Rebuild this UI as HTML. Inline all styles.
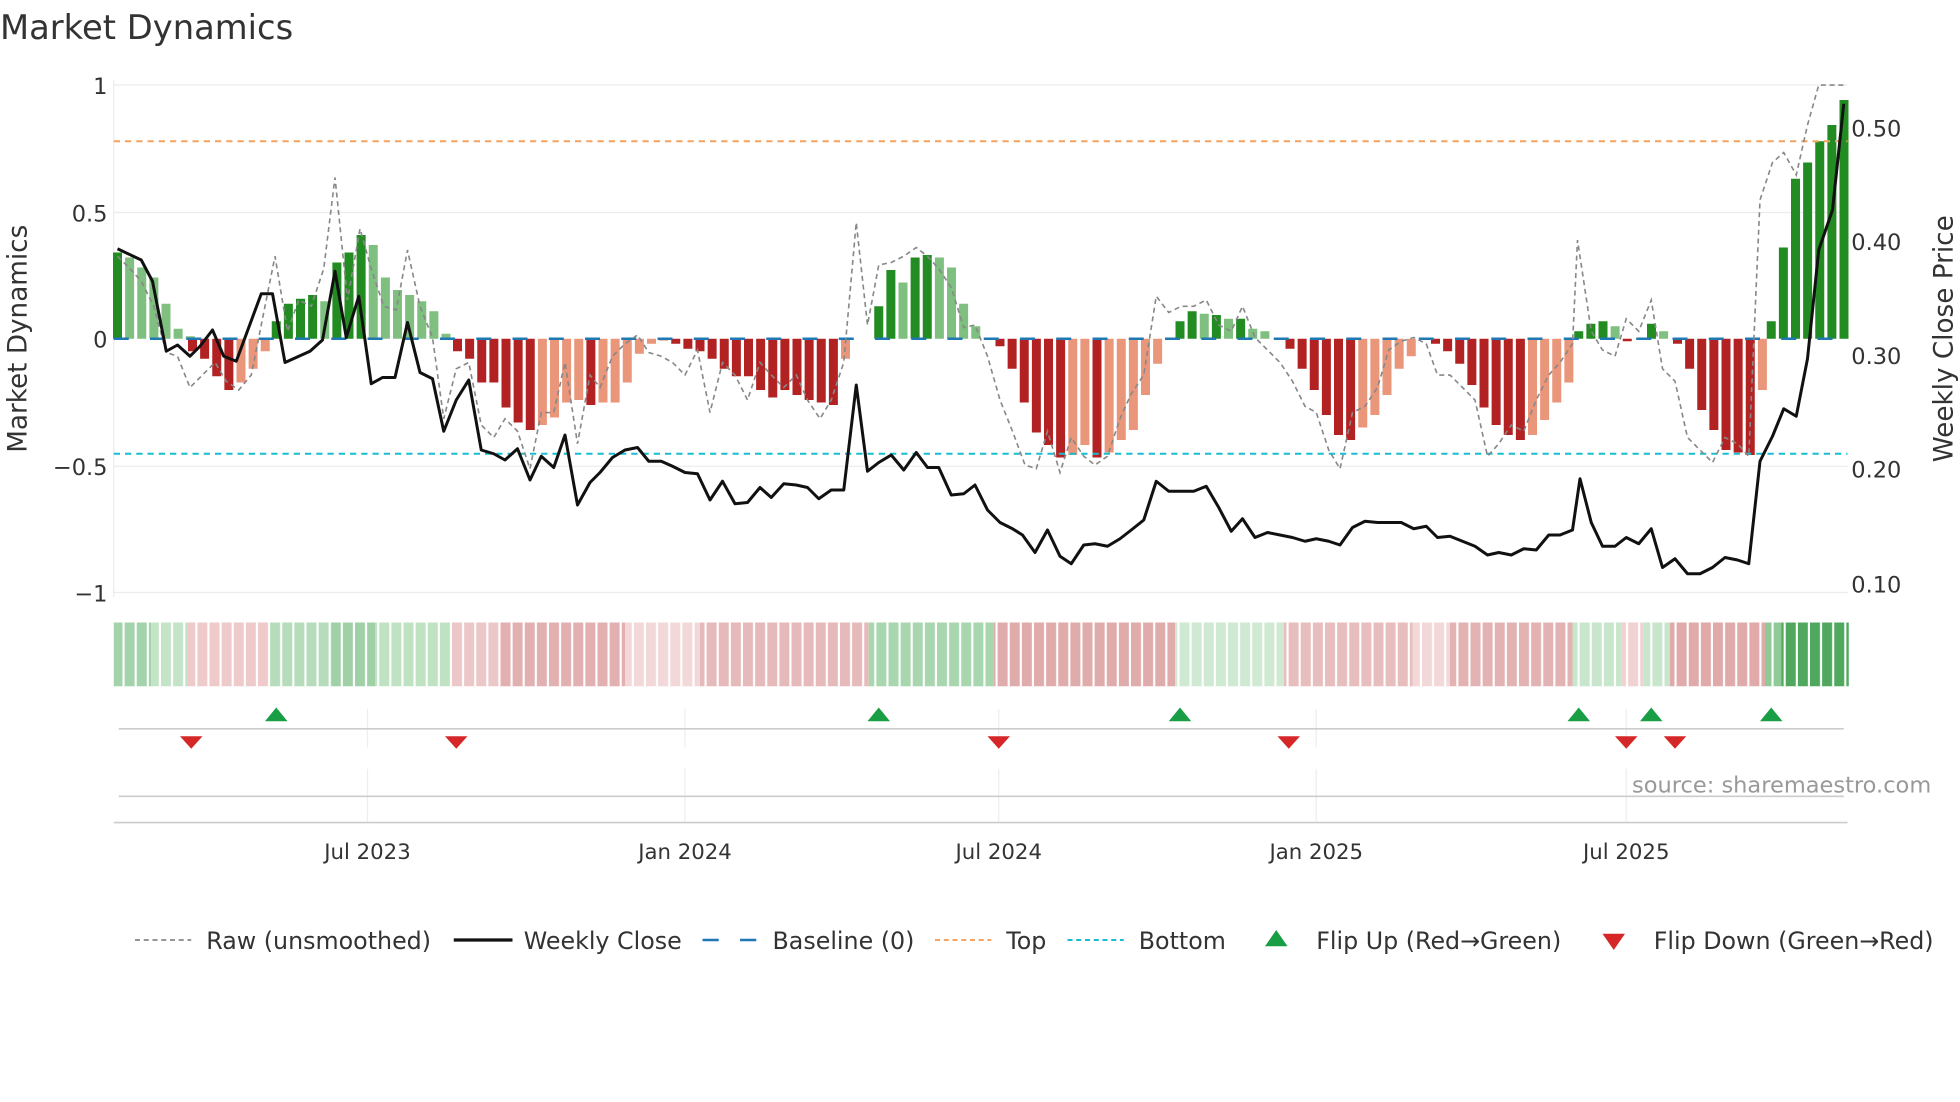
<!DOCTYPE html>
<html><head><meta charset="utf-8"><style>
html,body{margin:0;padding:0;background:#fff;width:1960px;height:1102px;overflow:hidden}
svg{display:block}
text{font-family:"DejaVu Sans","Liberation Sans",sans-serif;fill:#333}
.gd{fill:#228b22}.gl{fill:#7fbf7f}.rd{fill:#b22222}.rl{fill:#e9967a}
</style></head><body>
<svg width="1960" height="1102" viewBox="0 0 1568 881.6" xmlns="http://www.w3.org/2000/svg">
<defs>
<pattern id="gap" patternUnits="userSpaceOnUse" x="90" y="0" width="9.7" height="10">
<rect x="8" y="0" width="1.8" height="10" fill="#fff"/>
</pattern>
</defs>
<rect width="1568" height="882" fill="#fff"/>
<text x="0" y="31" font-size="27">Market Dynamics</text>
<g stroke="#ececec" stroke-width="1">
<line x1="91" y1="68" x2="1478" y2="68"/><line x1="91" y1="170" x2="1478" y2="170"/>
<line x1="91" y1="373" x2="1478" y2="373"/><line x1="91" y1="474" x2="1478" y2="474"/>
<line x1="91" y1="64" x2="91" y2="478"/>
</g>
<g font-size="18" text-anchor="end">
<text x="86" y="75">1</text><text x="86" y="177">0.5</text><text x="86" y="278">0</text>
<text x="86" y="380">−0.5</text><text x="86" y="481">−1</text>
</g>
<g font-size="18">
<text x="1481" y="109">0.50</text><text x="1481" y="200">0.40</text><text x="1481" y="291">0.30</text>
<text x="1481" y="382">0.20</text><text x="1481" y="474">0.10</text>
</g>
<text font-size="21" transform="translate(21,271) rotate(-90)" text-anchor="middle">Market Dynamics</text>
<text font-size="21" transform="translate(1562,271) rotate(-90)" text-anchor="middle">Weekly Close Price</text>

<g>
<!-- seg1 -->
<rect class="gd" x="90.4" y="202" width="7.2" height="69"/>
<rect class="gl" x="100.1" y="206" width="7.2" height="65"/>
<rect class="gl" x="109.8" y="214" width="7.2" height="57"/>
<rect class="gl" x="119.5" y="222" width="7.2" height="49"/>
<rect class="gl" x="129.2" y="243" width="7.2" height="28"/>
<rect class="gl" x="138.9" y="263" width="7.2" height="8"/>
<rect class="gl" x="148.6" y="269" width="7.2" height="2"/>
<!-- seg2 -->
<rect class="rd" x="150.4" y="271" width="7.2" height="10"/>
<rect class="rd" x="160.1" y="271" width="7.2" height="16"/>
<rect class="rd" x="169.8" y="271" width="7.2" height="30"/>
<rect class="rd" x="179.5" y="271" width="7.2" height="41"/>
<rect class="rl" x="189.2" y="271" width="7.2" height="35"/>
<rect class="rl" x="198.9" y="271" width="7.2" height="24"/>
<rect class="rl" x="208.6" y="271" width="7.2" height="10"/>
<!-- seg3 -->
<rect class="gd" x="217.4" y="257" width="7.2" height="14"/>
<rect class="gd" x="227.1" y="243" width="7.2" height="28"/>
<rect class="gd" x="236.8" y="239" width="7.2" height="32"/>
<rect class="gd" x="246.5" y="236" width="7.2" height="35"/>
<rect class="gl" x="256.2" y="241" width="7.2" height="30"/>
<rect class="gd" x="265.9" y="210" width="7.2" height="61"/>
<rect class="gd" x="275.6" y="202" width="7.2" height="69"/>
<rect class="gd" x="285.3" y="188" width="7.2" height="83"/>
<rect class="gl" x="295" y="196" width="7.2" height="75"/>
<rect class="gl" x="304.7" y="222" width="7.2" height="49"/>
<rect class="gl" x="314.4" y="232" width="7.2" height="39"/>
<rect class="gl" x="324.1" y="236" width="7.2" height="35"/>
<rect class="gl" x="333.8" y="241" width="7.2" height="30"/>
<rect class="gl" x="343.5" y="249" width="7.2" height="22"/>
<rect class="gl" x="353.2" y="267" width="7.2" height="4"/>
<!-- seg4 -->
<rect class="rd" x="362.4" y="271" width="7.2" height="10"/>
<rect class="rd" x="372.1" y="271" width="7.2" height="16"/>
<rect class="rd" x="381.8" y="271" width="7.2" height="35"/>
<rect class="rd" x="391.5" y="271" width="7.2" height="35"/>
<rect class="rd" x="401.2" y="271" width="7.2" height="55"/>
<rect class="rd" x="410.9" y="271" width="7.2" height="67"/>
<rect class="rd" x="420.6" y="271" width="7.2" height="73"/>
<rect class="rl" x="430.3" y="271" width="7.2" height="69"/>
<rect class="rl" x="440" y="271" width="7.2" height="63"/>
<rect class="rl" x="449.7" y="271" width="7.2" height="51"/>
<rect class="rl" x="459.4" y="271" width="7.2" height="49"/>
<rect class="rd" x="469.1" y="271" width="7.2" height="53"/>
<rect class="rl" x="478.8" y="271" width="7.2" height="51"/>
<rect class="rl" x="488.5" y="271" width="7.2" height="51"/>
<rect class="rl" x="498.2" y="271" width="7.2" height="35"/>
<rect class="rl" x="507.9" y="271" width="7.2" height="12"/>
<rect class="rl" x="517.6" y="271" width="7.2" height="4"/>
<rect class="rl" x="527.3" y="271" width="7.2" height="1.5"/>
<rect class="rd" x="537" y="271" width="7.2" height="4"/>
<rect class="rd" x="546.7" y="271" width="7.2" height="8"/>
<rect class="rd" x="556.4" y="271" width="7.2" height="10"/>
<rect class="rd" x="566.1" y="271" width="7.2" height="16"/>
<rect class="rd" x="575.8" y="271" width="7.2" height="24"/>
<rect class="rd" x="585.5" y="271" width="7.2" height="30"/>
<rect class="rd" x="595.2" y="271" width="7.2" height="30"/>
<rect class="rd" x="604.9" y="271" width="7.2" height="41"/>
<rect class="rd" x="614.6" y="271" width="7.2" height="47"/>
<rect class="rd" x="624.3" y="271" width="7.2" height="41"/>
<rect class="rd" x="634" y="271" width="7.2" height="45"/>
<rect class="rd" x="643.7" y="271" width="7.2" height="49"/>
<rect class="rd" x="653.4" y="271" width="7.2" height="51"/>
<rect class="rd" x="663.1" y="271" width="7.2" height="53"/>
<rect class="rl" x="672.8" y="271" width="7.2" height="16"/>
<!-- seg5 -->
<rect class="gd" x="699.4" y="245" width="7.2" height="26"/>
<rect class="gd" x="709.1" y="216" width="7.2" height="55"/>
<rect class="gl" x="718.8" y="226" width="7.2" height="45"/>
<rect class="gd" x="728.5" y="206" width="7.2" height="65"/>
<rect class="gd" x="738.2" y="204" width="7.2" height="67"/>
<rect class="gl" x="747.9" y="206" width="7.2" height="65"/>
<rect class="gl" x="757.6" y="214" width="7.2" height="57"/>
<rect class="gl" x="767.3" y="243" width="7.2" height="28"/>
<rect class="gl" x="777" y="261" width="7.2" height="10"/>
<!-- seg6 -->
<rect class="rd" x="796.4" y="271" width="7.2" height="6"/>
<rect class="rd" x="806.1" y="271" width="7.2" height="24"/>
<rect class="rd" x="815.8" y="271" width="7.2" height="51"/>
<rect class="rd" x="825.5" y="271" width="7.2" height="75"/>
<rect class="rd" x="835.2" y="271" width="7.2" height="85"/>
<rect class="rd" x="844.9" y="271" width="7.2" height="95"/>
<rect class="rl" x="854.6" y="271" width="7.2" height="93"/>
<rect class="rl" x="864.3" y="271" width="7.2" height="85"/>
<rect class="rd" x="874" y="271" width="7.2" height="95"/>
<rect class="rl" x="883.7" y="271" width="7.2" height="91"/>
<rect class="rl" x="893.4" y="271" width="7.2" height="81"/>
<rect class="rl" x="903.1" y="271" width="7.2" height="73"/>
<rect class="rl" x="912.8" y="271" width="7.2" height="45"/>
<rect class="rl" x="922.5" y="271" width="7.2" height="20"/>
<!-- seg7 -->
<rect class="gd" x="940.4" y="257" width="7.2" height="14"/>
<rect class="gd" x="950.1" y="249" width="7.2" height="22"/>
<rect class="gl" x="959.8" y="251" width="7.2" height="20"/>
<rect class="gd" x="969.5" y="252" width="7.2" height="19"/>
<rect class="gl" x="979.2" y="255" width="7.2" height="16"/>
<rect class="gd" x="988.9" y="255" width="7.2" height="16"/>
<rect class="gl" x="998.6" y="263" width="7.2" height="8"/>
<rect class="gl" x="1008.3" y="265" width="7.2" height="6"/>
<!-- seg8 -->
<rect class="rd" x="1028.4" y="271" width="7.2" height="8"/>
<rect class="rd" x="1038.1" y="271" width="7.2" height="24"/>
<rect class="rd" x="1047.8" y="271" width="7.2" height="41"/>
<rect class="rd" x="1057.5" y="271" width="7.2" height="61"/>
<rect class="rd" x="1067.2" y="271" width="7.2" height="77"/>
<rect class="rd" x="1076.9" y="271" width="7.2" height="81"/>
<rect class="rl" x="1086.6" y="271" width="7.2" height="71"/>
<rect class="rl" x="1096.3" y="271" width="7.2" height="61"/>
<rect class="rl" x="1106" y="271" width="7.2" height="45"/>
<rect class="rl" x="1115.7" y="271" width="7.2" height="24"/>
<rect class="rl" x="1125.4" y="271" width="7.2" height="14"/>
<rect class="rd" x="1144.8" y="271" width="7.2" height="4"/>
<rect class="rd" x="1154.5" y="271" width="7.2" height="10"/>
<rect class="rd" x="1164.2" y="271" width="7.2" height="20"/>
<rect class="rd" x="1173.9" y="271" width="7.2" height="37"/>
<rect class="rd" x="1183.6" y="271" width="7.2" height="55"/>
<rect class="rd" x="1193.3" y="271" width="7.2" height="69"/>
<rect class="rd" x="1203" y="271" width="7.2" height="77"/>
<rect class="rd" x="1212.7" y="271" width="7.2" height="81"/>
<rect class="rl" x="1222.4" y="271" width="7.2" height="77"/>
<rect class="rl" x="1232.1" y="271" width="7.2" height="65"/>
<rect class="rl" x="1241.8" y="271" width="7.2" height="51"/>
<rect class="rl" x="1251.5" y="271" width="7.2" height="35"/>
<!-- seg9 -->
<rect class="gd" x="1259.4" y="265" width="7.2" height="6"/>
<rect class="gd" x="1269.1" y="259" width="7.2" height="12"/>
<rect class="gd" x="1278.8" y="257" width="7.2" height="14"/>
<rect class="gl" x="1288.5" y="261" width="7.2" height="10"/>
<rect class="rd" x="1298.2" y="271" width="7.2" height="2"/>
<rect class="gd" x="1317.6" y="259" width="7.2" height="12"/>
<rect class="gl" x="1327.3" y="265" width="7.2" height="6"/>
<!-- seg10 -->
<rect class="rd" x="1338.4" y="271" width="7.2" height="4"/>
<rect class="rd" x="1348.1" y="271" width="7.2" height="24"/>
<rect class="rd" x="1357.8" y="271" width="7.2" height="57"/>
<rect class="rd" x="1367.5" y="271" width="7.2" height="73"/>
<rect class="rd" x="1377.2" y="271" width="7.2" height="89"/>
<rect class="rd" x="1386.9" y="271" width="7.2" height="91"/>
<rect class="rd" x="1396.6" y="271" width="7.2" height="93"/>
<rect class="rl" x="1406.3" y="271" width="7.2" height="41"/>
<!-- seg11 -->
<rect class="gd" x="1413.4" y="257" width="7.2" height="14"/>
<rect class="gd" x="1423.1" y="198" width="7.2" height="73"/>
<rect class="gd" x="1432.8" y="143" width="7.2" height="128"/>
<rect class="gd" x="1442.5" y="130" width="7.2" height="141"/>
<rect class="gd" x="1452.2" y="113" width="7.2" height="158"/>
<rect class="gd" x="1461.9" y="100" width="7.2" height="171"/>
<rect class="gd" x="1471.6" y="80" width="7.2" height="191"/>
</g>

<line x1="91" y1="113" x2="1478" y2="113" stroke="#f4a460" stroke-width="1.6" stroke-dasharray="5,4"/>
<line x1="91" y1="363" x2="1478" y2="363" stroke="#17becf" stroke-width="1.6" stroke-dasharray="5,4"/>
<line x1="91" y1="271" x2="1478" y2="271" stroke="#1f77b4" stroke-width="2" stroke-dasharray="12,17"/>

<polyline fill="none" stroke="#888" stroke-width="1.3" stroke-dasharray="4,3" points="94,205 104,215 113,225 123,245 133,282 142,285 152,310 162,300 172,290 181,305 191,312 201,300 210,255 220,205 230,265 239,240 249,245 259,215 268,142 278,240 288,183 297,215 307,245 317,248 326,200 336,245 346,270 355,335 365,295 375,290 385,340 395,350 404,335 414,345 424,375 433,330 443,330 452,290 462,355 472,300 480,310 490,285 500,275 510,268 519,282 529,285 538,290 548,300 558,280 568,330 578,290 588,300 598,320 608,290 617,300 627,310 637,300 646,320 656,335 665,320 675,290 685,178 694,260 703,212 713,210 723,205 733,198 742,205 751,215 761,230 771,262 780,260 790,285 800,320 810,345 820,372 829,375 838,345 848,378 857,350 867,365 876,372 886,365 896,335 905,315 915,300 925,237 935,250 945,245 955,245 965,240 975,260 985,265 994,245 1004,270 1014,280 1024,290 1034,305 1044,325 1053,330 1063,360 1072,375 1082,330 1092,325 1102,310 1111,280 1121,273 1131,270 1141,275 1150,300 1160,300 1170,310 1180,320 1190,365 1199,355 1209,340 1219,345 1229,320 1239,300 1248,290 1258,275 1262,192 1273,265 1282,280 1292,285 1301,255 1311,265 1321,240 1330,295 1340,305 1350,350 1360,360 1370,370 1380,350 1390,355 1399,365 1408,160 1418,130 1427,122 1437,140 1446,100 1455,68 1475,68"/>

<polyline fill="none" stroke="#111" stroke-width="2.4" stroke-linejoin="round" points="94,199 113,208 122,225 133,281 142,276 152,285 160,277 170,264 179,285 189,289 199,262 209,235 218,235 228,290 248,281 258,272 268,217 277,270 287,237 297,307 306,302 316,302 326,258 336,298 346,303 355,345 365,320 375,304 385,360 395,363 404,368 414,359 424,384 433,365 443,374 452,348 462,404 472,386 480,378 490,366 500,360 510,358 519,369 529,369 538,373 548,378 558,379 568,400 578,385 588,403 598,402 608,390 617,398 627,387 637,388 646,390 655,399 665,392 675,392 685,308 694,377 703,370 713,364 723,376 733,362 742,374 751,374 761,396 771,395 780,388 790,408 800,418 810,423 818,428 828,442 838,424 848,445 857,451 867,436 876,435 886,437 896,431 905,424 915,416 925,385 935,393 945,393 955,393 965,389 975,406 985,425 994,415 1004,430 1014,426 1024,428 1034,430 1044,433 1053,431 1063,433 1072,436 1082,422 1092,417 1102,418 1111,418 1121,418 1131,423 1141,421 1150,430 1160,429 1170,433 1180,437 1190,444 1199,442 1209,444 1219,439 1229,440 1239,428 1248,428 1258,424 1264,383 1273,418 1282,437 1292,437 1301,430 1311,435 1321,423 1330,454 1340,447 1350,459 1360,459 1370,454 1380,446 1390,448 1399,451 1408,369 1418,349 1427,327 1437,333 1446,287 1455,200 1466,168 1475,83"/>

<!-- heat strip -->
<g>
<rect x="91" y="498" width="30" height="51" fill="#a3d3aa"/>
<rect x="121" y="498" width="29" height="51" fill="#c4e4c8"/>
<rect x="150" y="498" width="66" height="51" fill="#eecaca"/>
<rect x="216" y="498" width="49" height="51" fill="#b6dcbb"/>
<rect x="265" y="498" width="35" height="51" fill="#9fd0a6"/>
<rect x="300" y="498" width="60" height="51" fill="#bfe2c3"/>
<rect x="360" y="498" width="40" height="51" fill="#ebc7c7"/>
<rect x="400" y="498" width="100" height="51" fill="#e2b0b0"/>
<rect x="500" y="498" width="60" height="51" fill="#f2d8d8"/>
<rect x="560" y="498" width="135" height="51" fill="#e6baba"/>
<rect x="695" y="498" width="100" height="51" fill="#a8d6ae"/>
<rect x="795" y="498" width="145" height="51" fill="#e0abab"/>
<rect x="940" y="498" width="87" height="51" fill="#cfe9d2"/>
<rect x="1027" y="498" width="103" height="51" fill="#e8bdbd"/>
<rect x="1130" y="498" width="30" height="51" fill="#f2d8d8"/>
<rect x="1160" y="498" width="98" height="51" fill="#e3b3b3"/>
<rect x="1258" y="498" width="39" height="51" fill="#c8e6cc"/>
<rect x="1297" y="498" width="18" height="51" fill="#f0d2d2"/>
<rect x="1315" y="498" width="21" height="51" fill="#c8e6cc"/>
<rect x="1336" y="498" width="76" height="51" fill="#e0aaaa"/>
<rect x="1412" y="498" width="13" height="51" fill="#8fca98"/>
<rect x="1425" y="498" width="54" height="51" fill="#4fa85e"/>
<rect x="91" y="498" width="1388" height="51" fill="url(#gap)"/>
</g>

<g stroke="#eee" stroke-width="1">
<line x1="294" y1="567" x2="294" y2="598"/><line x1="548" y1="567" x2="548" y2="598"/><line x1="799" y1="567" x2="799" y2="598"/><line x1="1053" y1="567" x2="1053" y2="598"/><line x1="1301" y1="567" x2="1301" y2="598"/>
<line x1="294" y1="615" x2="294" y2="658"/><line x1="548" y1="615" x2="548" y2="658"/><line x1="799" y1="615" x2="799" y2="658"/><line x1="1053" y1="615" x2="1053" y2="658"/><line x1="1301" y1="615" x2="1301" y2="658"/>
</g>
<line x1="95" y1="583" x2="1475" y2="583" stroke="#ccc" stroke-width="1.3"/>
<line x1="95" y1="637" x2="1475" y2="637" stroke="#ccc" stroke-width="1.3"/>
<line x1="91" y1="658" x2="1478" y2="658" stroke="#ccc" stroke-width="1.3"/>
<g fill="#1a9e45">
<polygon points="212,577 230,577 221,566"/><polygon points="694,577 712,577 703,566"/><polygon points="935,577 953,577 944,566"/>
<polygon points="1254,577 1272,577 1263,566"/><polygon points="1312,577 1330,577 1321,566"/><polygon points="1408,577 1426,577 1417,566"/>
</g>
<g fill="#d62728">
<polygon points="144,589 162,589 153,599"/><polygon points="356,589 374,589 365,599"/><polygon points="790,589 808,589 799,599"/>
<polygon points="1022,589 1040,589 1031,599"/><polygon points="1292,589 1310,589 1301,599"/><polygon points="1331,589 1349,589 1340,599"/>
</g>
<text x="1545" y="634" font-size="18" text-anchor="end" style="fill:#999">source: sharemaestro.com</text>
<g font-size="17" text-anchor="middle">
<text x="294" y="687">Jul 2023</text><text x="548" y="687">Jan 2024</text><text x="799" y="687">Jul 2024</text><text x="1053" y="687">Jan 2025</text><text x="1301" y="687">Jul 2025</text>
</g>
<g font-size="19">
<line x1="108" y1="752" x2="153" y2="752" stroke="#888" stroke-width="1.4" stroke-dasharray="4,3"/>
<text x="165" y="759">Raw (unsmoothed)</text>
<line x1="363" y1="752" x2="410" y2="752" stroke="#111" stroke-width="2.6"/>
<text x="419" y="759">Weekly Close</text>
<line x1="562" y1="752" x2="606" y2="752" stroke="#1f77b4" stroke-width="2" stroke-dasharray="13,17"/>
<text x="618" y="759">Baseline (0)</text>
<line x1="748" y1="752" x2="793" y2="752" stroke="#f4a460" stroke-width="1.6" stroke-dasharray="4,3"/>
<text x="805" y="759">Top</text>
<line x1="854" y1="752" x2="899" y2="752" stroke="#17becf" stroke-width="1.6" stroke-dasharray="4,3"/>
<text x="911" y="759">Bottom</text>
<polygon points="1012,757 1030,757 1021,744" fill="#1a9e45"/>
<text x="1053" y="759">Flip Up (Red→Green)</text>
<polygon points="1282,747 1300,747 1291,760" fill="#d62728"/>
<text x="1323" y="759">Flip Down (Green→Red)</text>
</g>
</svg>
</body></html>
